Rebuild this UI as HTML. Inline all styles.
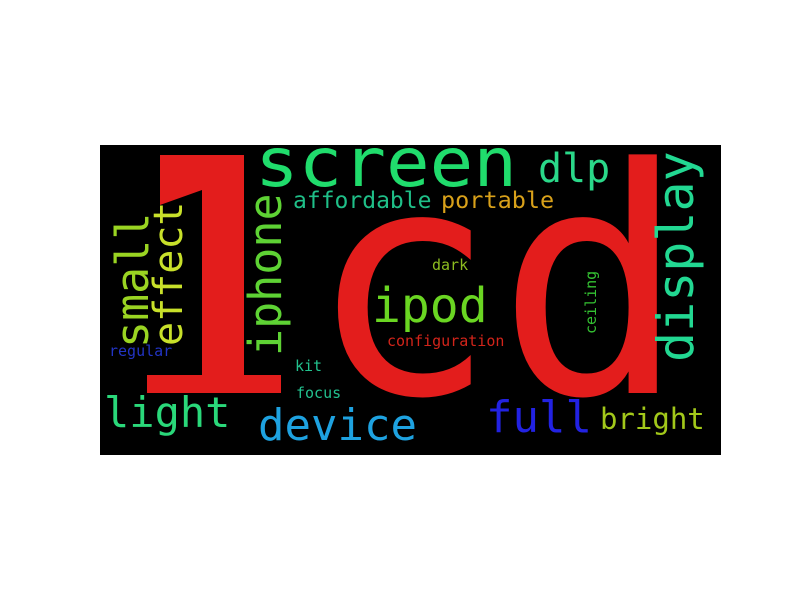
<!DOCTYPE html>
<html><head><meta charset="utf-8"><style>
html,body{margin:0;padding:0;background:#fff;width:800px;height:600px;overflow:hidden}
svg{display:block}
text{font-family:"DejaVu Sans Mono","Liberation Mono",monospace}
</style></head><body>
<svg width="800" height="600" viewBox="0 0 800 600">
<rect x="100" y="145" width="621" height="310" fill="#000"/>
<clipPath id="c"><rect x="100" y="145" width="621" height="310"/></clipPath>
<g clip-path="url(#c)">
<polygon points="160,155 244,155 244,375 281,375 281,393 147,393 147,375 202,375 202,190 160,205" fill="#e31d1c"/>
<text x="308" y="393" font-size="314" fill="#e31d1c">cd</text>
<text x="255" y="186" font-size="68" fill="#20dc6c" textLength="262" lengthAdjust="spacingAndGlyphs">screen</text>
<text x="538" y="182" font-size="40" fill="#2ad889">dlp</text>
<text x="293" y="208" font-size="23" fill="#1fbf88">affordable</text>
<text x="441" y="208" font-size="23.5" fill="#d9a11a">portable</text>
<text x="372" y="322" font-size="48" fill="#6ad622">ipod</text>
<text x="387" y="346" font-size="15" fill="#d2241a">configuration</text>
<text x="432" y="270" font-size="15" fill="#8cbc20">dark</text>
<text x="109" y="356" font-size="15" fill="#2234c4">regular</text>
<text x="295" y="371" font-size="15" fill="#22c28e">kit</text>
<text x="296" y="398" font-size="15" fill="#22c08e">focus</text>
<text x="104" y="427" font-size="42" fill="#2ad87a">light</text>
<text x="258" y="440" font-size="44" fill="#1ea2e0">device</text>
<text x="486" y="432" font-size="44" fill="#2222e2">full</text>
<text x="600" y="429" font-size="29" fill="#a2c81a">bright</text>
<text transform="translate(693,362) rotate(-90)" font-size="50" fill="#22d892">display</text>
<text transform="translate(148,348) rotate(-90)" font-size="45" fill="#9ad422">small</text>
<text transform="translate(182,346) rotate(-90)" font-size="40" fill="#c8e02a">effect</text>
<text transform="translate(281,356) rotate(-90)" font-size="45" fill="#5ed234">iphone</text>
<text transform="translate(596,334) rotate(-90)" font-size="15" fill="#34c232">ceiling</text>
</g>
</svg>
</body></html>
